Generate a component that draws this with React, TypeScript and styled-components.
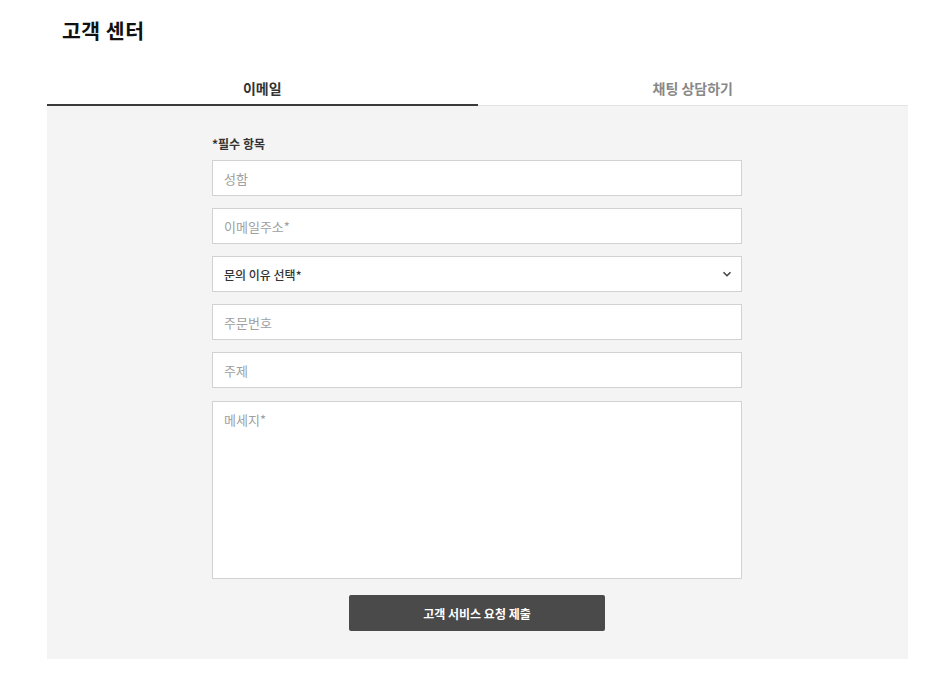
import React from "react";
import styled, { createGlobalStyle } from "styled-components";

const Global = createGlobalStyle`
  html, body { margin: 0; padding: 0; background: #fff; }
  body { font-family: "Noto Sans CJK KR", "Noto Sans", sans-serif; color: #222; }
  * { box-sizing: border-box; }
`;

const Page = styled.div`
  padding: 0 32px 20px 47px;
`;

const Title = styled.h1`
  margin: 0;
  padding: 17px 0 0 15px;
  font-size: 20.5px;
  line-height: 26px;
  font-weight: 700;
  letter-spacing: 0.5px;
  color: #111;
`;

const TabBar = styled.div`
  margin-top: 29px;
  display: flex;
  align-items: flex-end;
`;

const Tab = styled.div<{ $active?: boolean }>`
  flex: 1;
  display: flex;
  align-items: center;
  justify-content: center;
  height: 34px;
  font-size: 14px;
  font-weight: 700;
  color: ${(p) => (p.$active ? "#333" : "#888")};
  border-bottom: ${(p) => (p.$active ? "2px solid #3a3a3a" : "1px solid #e4e4e4")};
  padding-bottom: ${(p) => (p.$active ? "0" : "1px")};
`;

const Panel = styled.div`
  background: #f4f4f4;
  padding: 30px 0 28px;
  display: flex;
  justify-content: center;
`;

const Form = styled.form`
  width: 530px;
  margin-left: -1px;
  display: flex;
  flex-direction: column;
`;

const Required = styled.div`
  font-size: 12px;
  line-height: 16px;
  font-weight: 700;
  color: #333;
  margin-bottom: 8px;
`;

const Fields = styled.div`
  display: flex;
  flex-direction: column;
  gap: 12px;
`;

const Input = styled.input`
  width: 100%;
  height: 36px;
  border: 1px solid #d2d2d2;
  background: #fff;
  padding: 0 11px;
  font-family: inherit;
  font-size: 13px;
  color: #333;
  outline: none;
  &::placeholder { color: #a0a0a0; }
`;

const SelectBox = styled.div`
  position: relative;
  height: 36px;
  border: 1px solid #d2d2d2;
  background: #fff;
  padding: 0 9px 0 11px;
  display: flex;
  align-items: center;
  justify-content: space-between;
  font-size: 12px;
  font-weight: 500;
  color: #333;
`;

const Chevron = styled.svg`
  width: 10px;
  height: 10px;
`;

const TextArea = styled.textarea`
  width: 100%;
  height: 178px;
  margin-top: 1px;
  border: 1px solid #d2d2d2;
  background: #fff;
  padding: 8px 11px;
  font-family: inherit;
  font-size: 13px;
  resize: none;
  outline: none;
  display: block;
  &::placeholder { color: #a0a0a0; }
`;

const Submit = styled.button`
  align-self: center;
  margin-top: 16px;
  width: 256px;
  height: 36px;
  border: none;
  border-radius: 2px;
  background: #4a4a4a;
  color: #fff;
  font-family: inherit;
  font-size: 12px;
  font-weight: 700;
  cursor: pointer;
`;

export default function App() {
  return (
    <>
      <Global />
      <Page>
        <Title>고객 센터</Title>
        <TabBar>
          <Tab $active>이메일</Tab>
          <Tab>채팅 상담하기</Tab>
        </TabBar>
        <Panel>
          <Form onSubmit={(e) => e.preventDefault()}>
            <Required>*필수 항목</Required>
            <Fields>
              <Input placeholder="성함" />
              <Input placeholder="이메일주소*" />
              <SelectBox>
                <span>문의 이유 선택*</span>
                <Chevron viewBox="0 0 10 10">
                  <polyline points="1.5,3.2 5,6.7 8.5,3.2" fill="none" stroke="#444" strokeWidth="1.6" />
                </Chevron>
              </SelectBox>
              <Input placeholder="주문번호" />
              <Input placeholder="주제" />
              <TextArea placeholder="메세지*" />
            </Fields>
            <Submit type="submit">고객 서비스 요청 제출</Submit>
          </Form>
        </Panel>
      </Page>
    </>
  );
}
